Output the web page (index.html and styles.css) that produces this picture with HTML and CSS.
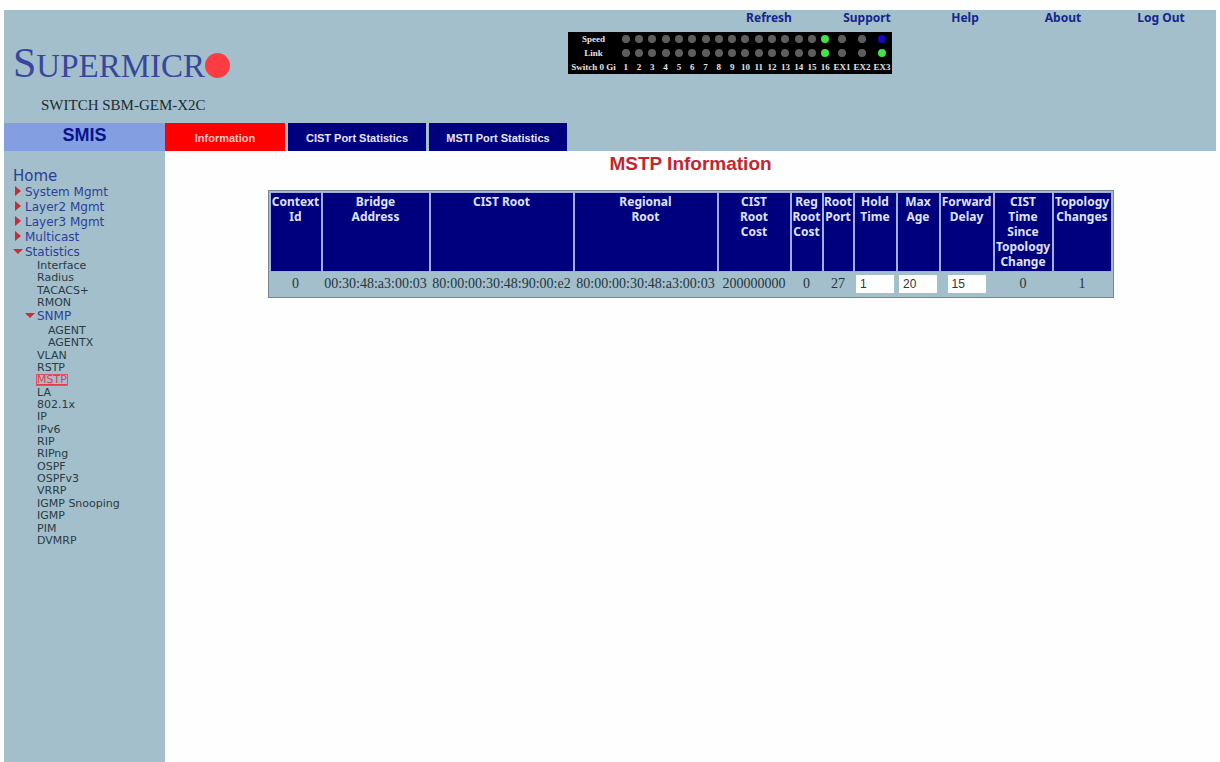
FILE: index.html
```html
<!DOCTYPE html>
<html lang="en">
<head>
    <meta charset="UTF-8">
    <meta name="viewport" content="width=device-width, initial-scale=1.0">
    <title>MSTP Information</title>
    <link rel="stylesheet" href="styles.css">
</head>
<body>
    <header class="header">
        <div class="brand">
            <div class="logo"><span class="logo-first">S</span>UPERMICR<span class="logo-dot"></span></div>
            <div class="model">SWITCH SBM-GEM-X2C</div>
        </div>
        <div class="header-right">
            <nav class="top-nav">
                <a href="#">Refresh</a>
                <a href="#">Support</a>
                <a href="#">Help</a>
                <a href="#">About</a>
                <a href="#">Log Out</a>
            </nav>
            <table class="leds">
                <tbody>
                    <tr id="speedRow"><th class="led-label">Speed</th></tr>
                    <tr id="linkRow"><th class="led-label">Link</th></tr>
                    <tr id="portRow"><th class="led-label">Switch 0 Gi</th></tr>
                </tbody>
            </table>
        </div>
    </header>

    <div class="layout">
        <aside class="sidebar">
            <div class="sidebar-title">SMIS</div>
            <nav class="menu">
                <a class="home" href="#">Home</a>
                <ul class="groups">
                    <li><a class="closed" href="#">System Mgmt</a></li>
                    <li><a class="closed" href="#">Layer2 Mgmt</a></li>
                    <li><a class="closed" href="#">Layer3 Mgmt</a></li>
                    <li><a class="closed" href="#">Multicast</a></li>
                    <li><a class="open" href="#">Statistics</a></li>
                </ul>
                <ul class="items">
                    <li><a href="#">Interface</a></li>
                    <li><a href="#">Radius</a></li>
                    <li><a href="#">TACACS+</a></li>
                    <li><a href="#">RMON</a></li>
                    <li class="subgroup"><a class="open" href="#">SNMP</a></li>
                    <li class="deep"><a href="#">AGENT</a></li>
                    <li class="deep"><a href="#">AGENTX</a></li>
                    <li><a href="#">VLAN</a></li>
                    <li><a href="#">RSTP</a></li>
                    <li><a class="current" href="#">MSTP</a></li>
                    <li><a href="#">LA</a></li>
                    <li><a href="#">802.1x</a></li>
                    <li><a href="#">IP</a></li>
                    <li><a href="#">IPv6</a></li>
                    <li><a href="#">RIP</a></li>
                    <li><a href="#">RIPng</a></li>
                    <li><a href="#">OSPF</a></li>
                    <li><a href="#">OSPFv3</a></li>
                    <li><a href="#">VRRP</a></li>
                    <li><a href="#">IGMP Snooping</a></li>
                    <li><a href="#">IGMP</a></li>
                    <li><a href="#">PIM</a></li>
                    <li><a href="#">DVMRP</a></li>
                </ul>
            </nav>
        </aside>

        <main class="content">
            <nav class="tabs">
                <a class="tab active" href="#">Information</a>
                <a class="tab" href="#">CIST Port Statistics</a>
                <a class="tab" href="#">MSTI Port Statistics</a>
            </nav>
            <h1>MSTP Information</h1>
            <table class="mstp">
                <colgroup>
                    <col class="c-context">
                    <col class="c-bridge">
                    <col class="c-root">
                    <col class="c-root">
                    <col class="c-cost">
                    <col class="c-reg">
                    <col class="c-port">
                    <col class="c-field">
                    <col class="c-field">
                    <col class="c-delay">
                    <col class="c-topology">
                    <col class="c-topology">
                </colgroup>
                <thead>
                    <tr>
                        <th>Context Id</th>
                        <th>Bridge<br>Address</th>
                        <th>CIST Root</th>
                        <th>Regional<br>Root</th>
                        <th>CIST<br>Root<br>Cost</th>
                        <th>Reg Root Cost</th>
                        <th>Root Port</th>
                        <th id="holdTime">Hold Time</th>
                        <th id="maxAge">Max<br>Age</th>
                        <th id="forwardDelay">Forward Delay</th>
                        <th>CIST<br>Time<br>Since<br>Topology<br>Change</th>
                        <th>Topology Changes</th>
                    </tr>
                </thead>
                <tbody>
                    <tr>
                        <td>0</td>
                        <td>00:30:48:a3:00:03</td>
                        <td>80:00:00:30:48:90:00:e2</td>
                        <td>80:00:00:30:48:a3:00:03</td>
                        <td>200000000</td>
                        <td>0</td>
                        <td>27</td>
                        <td><input type="text" value="1" aria-labelledby="holdTime"></td>
                        <td><input type="text" value="20" aria-labelledby="maxAge"></td>
                        <td><input type="text" value="15" aria-labelledby="forwardDelay"></td>
                        <td>0</td>
                        <td>1</td>
                    </tr>
                </tbody>
            </table>
        </main>
    </div>

    <script src="leds.js"></script>
</body>
</html>
```
FILE: styles.css
```css
* {
    box-sizing: border-box;
}
body {
    margin: 0;
    padding: 10px 4px 0;
    min-height: 100vh;
    display: flex;
    flex-direction: column;
    background: #fefefe;
    font-family: "Liberation Sans", Arial, sans-serif;
}
a {
    text-decoration: none;
}
ul {
    list-style: none;
    margin: 0;
    padding: 0;
}

/* header */
.header {
    display: grid;
    grid-template-columns: 1fr 648px;
    height: 113px;
    background: #a2bfcb;
}
.brand {
    padding: 31px 0 0 9px;
    font-family: "Liberation Serif", "Times New Roman", serif;
}
.logo {
    display: flex;
    align-items: baseline;
    height: 44px;
    line-height: 44px;
    font-size: 33px;
    color: #38479b;
}
.logo-first {
    font-size: 42px;
}
.logo-dot {
    align-self: center;
    width: 25px;
    height: 25px;
    margin-top: 4px;
    border-radius: 50%;
    background: #fb3c42;
}
.model {
    margin-top: 10px;
    padding-left: 28px;
    font-size: 15px;
    line-height: 20px;
    color: #1c2c34;
}
.top-nav {
    display: grid;
    grid-template-columns: repeat(5, 98px);
    justify-content: end;
    padding-right: 6px;
    height: 22px;
}
.top-nav a {
    font: bold 12px/16px "Noto Sans", sans-serif;
    text-align: center;
    color: #14258c;
}

/* port led panel */
.leds {
    width: 324px;
    table-layout: fixed;
    border-collapse: collapse;
    background: #000;
    color: #e4e4e4;
    font-family: "Liberation Serif", "Times New Roman", serif;
    font-size: 9px;
    font-weight: bold;
    line-height: 12px;
}
.leds th,
.leds td {
    height: 14px;
    padding: 0;
    text-align: center;
    white-space: nowrap;
}
.leds .led-label {
    width: 51px;
}
.leds .ex {
    width: 20px;
}
.led {
    display: block;
    width: 8px;
    height: 8px;
    margin: 0 auto;
    border-radius: 50%;
    background: #5e5e5e;
}
.led.green {
    background: #3fe34c;
}
.led.blue {
    background: #1a05c4;
}

/* sidebar */
.layout {
    flex: 1;
    display: grid;
    grid-template-columns: 161px 1fr;
}
.sidebar {
    background: #a2bfcb;
}
.sidebar-title {
    height: 28px;
    background: #849ee2;
    color: #0a138c;
    font-size: 18px;
    font-weight: bold;
    line-height: 24px;
    text-align: center;
}
.menu {
    padding: 16px 0 0 9px;
    font-family: "DejaVu Sans", Verdana, sans-serif;
}
.menu a {
    color: #2a3b45;
}
.menu .home {
    display: block;
    font-size: 15px;
    line-height: 18px;
    color: #2a3f94;
}
.groups li,
.subgroup {
    font-size: 12px;
    line-height: 15px;
}
.menu .closed,
.menu .open {
    display: flex;
    align-items: center;
    color: #2b3f9b;
}
.closed::before {
    content: "";
    margin: 0 4px 3px 2px;
    border-left: 6px solid #c62b38;
    border-top: 5px solid transparent;
    border-bottom: 5px solid transparent;
}
.open::before {
    content: "";
    margin: 0 2px 2px 0;
    border-top: 5px solid #d22a35;
    border-left: 5px solid transparent;
    border-right: 5px solid transparent;
}
.items {
    display: flex;
    flex-direction: column;
    justify-content: space-between;
    height: 287px;
}
.items li {
    padding-left: 24px;
    font-size: 11px;
    line-height: 12px;
}
.items .subgroup {
    padding-left: 12px;
    font-size: 12px;
    line-height: 15px;
}
.items .deep {
    padding-left: 35px;
}
.menu .current {
    display: inline-block;
    line-height: 10px;
    color: #e8384c;
    outline: 1px solid #e0506a;
    text-decoration: underline;
}

/* content */
.tabs {
    display: flex;
    gap: 3px;
    height: 28px;
    background: #a2bfcb;
}
.tab {
    width: 138px;
    padding-top: 3px;
    background: #00007f;
    color: #e8e8f4;
    font-size: 11px;
    font-weight: bold;
    line-height: 25px;
    text-align: center;
}
.tab.active {
    width: 120px;
    background: #fe0000;
    color: #ffc4c4;
}
h1 {
    margin: 2px 0 16px;
    color: #c3262e;
    font-size: 19px;
    line-height: 21px;
    text-align: center;
}
.mstp {
    margin: 0 auto;
    table-layout: fixed;
    width: 846px;
    border: 1px solid #77858c;
    border-spacing: 2px;
    background: #a2bfcb;
}
.mstp th {
    height: 78px;
    padding: 1px 0;
    background: #00007f;
    box-shadow: 0 0 0 1px #9fb0e0;
    color: #dfe3fa;
    font: bold 12px/15px "Noto Sans", sans-serif;
    vertical-align: top;
}
.mstp td {
    padding: 1px 0;
    color: #26343b;
    font-family: "Liberation Serif", "Times New Roman", serif;
    font-size: 14px;
    line-height: 20px;
    text-align: center;
    white-space: nowrap;
}
.mstp input {
    display: block;
    width: 38px;
    height: 18px;
    margin: 0 auto;
    padding: 0 4px;
    border: 0;
    background: #fff;
    color: #333;
    font: 12px "Liberation Sans", Arial, sans-serif;
}
.c-context { width: 50px; }
.c-bridge { width: 106px; }
.c-root { width: 142px; }
.c-cost { width: 71px; }
.c-reg { width: 30px; }
.c-port { width: 29px; }
.c-field { width: 41px; }
.c-delay { width: 52px; }
.c-topology { width: 57px; }
```
FILE: leds.js
```js
// one entry per port: label, speed led, link led
const ports = [];
for (let i = 1; i <= 15; i++) {
    ports.push([i, "", ""]);
}
ports.push([16, "green", "green"], ["EX1", "", ""], ["EX2", "", ""], ["EX3", "blue", "green"]);

function addCell(rowId, html, isEx) {
    const td = document.createElement("td");
    if (isEx) td.className = "ex";
    td.innerHTML = html;
    document.getElementById(rowId).appendChild(td);
}

ports.forEach(([label, speed, link]) => {
    const isEx = String(label).startsWith("EX");
    addCell("speedRow", `<span class="led ${speed}"></span>`, isEx);
    addCell("linkRow", `<span class="led ${link}"></span>`, isEx);
    addCell("portRow", label, isEx);
});
```
